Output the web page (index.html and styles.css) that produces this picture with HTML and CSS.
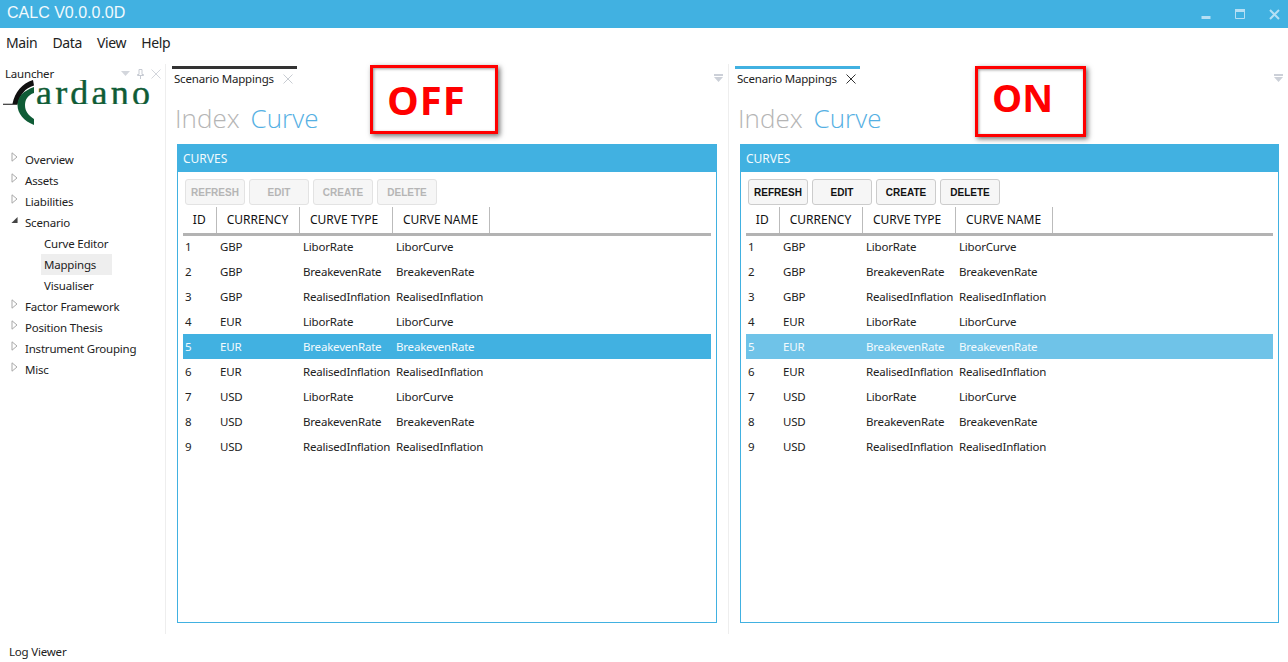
FILE: index.html
```html
<!DOCTYPE html>
<html lang="en">
<head>
  <meta charset="UTF-8">
  <title>CALC V0.0.0.0D</title>
  <link rel="stylesheet" href="styles.css">
</head>
<body>
  <svg class="defs" width="0" height="0">
    <symbol id="tri-closed" viewBox="0 0 7 10"><path d="M1 .8 6 5 1 9.2Z" fill="#fff" stroke="#a9a9a9"/></symbol>
    <symbol id="tri-open" viewBox="0 0 8 8"><path d="M7.5 .5V7.500H.5Z" fill="#444"/></symbol>
    <symbol id="dock-menu" viewBox="0 0 9 8"><path d="M0 0H9V2H0ZM0 3H9L4.500 8Z" fill="#ccd0d8"/></symbol>
  </svg>

  <div class="app">
    <div class="titlebar">
      <span class="app-title">CALC V0.0.0.0D</span>
      <div class="win-buttons">
        <svg width="10" height="11" viewBox="0 0 10 11"><path d="M.5 7H9.500V10H.5Z" fill="#b5dff4"/></svg>
        <svg width="10" height="11" viewBox="0 0 10 11"><path d="M.5 .5H9.500V9.500H.5Z" fill="none" stroke="#b5dff4"/><path d="M0 0H10V3H0Z" fill="#b5dff4"/></svg>
        <svg width="11" height="11" viewBox="0 0 11 11"><path d="M1 1 10 10M10 1 1 10" stroke="#b5dff4" stroke-width="2"/></svg>
      </div>
    </div>

    <div class="menu">
      <span>Main</span>
      <span>Data</span>
      <span>View</span>
      <span>Help</span>
    </div>

    <div class="main">
      <div class="sidebar">
        <div class="launcher-head">
          <span class="tight">Launcher</span>
          <div class="launcher-icons">
            <svg width="9" height="5" viewBox="0 0 9 5"><path d="M0 0H9L4.500 5Z" fill="#d3d6dc"/></svg>
            <svg width="7" height="10" viewBox="0 0 7 10"><path d="M2 .5H5V5.500H6.500V6.500H.5V5.500H2ZM3.500 6.500V10" fill="none" stroke="#c6cad2"/></svg>
            <svg width="10" height="10" viewBox="0 0 10 10"><path d="M.5 .5 9.500 9.500M9.500 .5 .5 9.500" stroke="#d3d6dc"/></svg>
          </div>
        </div>
        <svg class="logo" width="160" height="46" viewBox="0 0 160 46">
          <path d="M3 23.800H12.500C15 12 22 3.500 33 0L34 5.500C25 8 20 15 17.500 24.700H3Z" fill="#111"/>
          <path d="M34 7C23 11 17.500 17 17.500 25 17.500 33.500 24 41 34 45V39C28 35 25 31 25 25 25 19.500 28 15 34 13Z" fill="#0f5c36"/>
          <text class="logo-text" x="36" y="25">ardano</text>
          <rect x="36" y="24" width="120" height="6" fill="#fff"/>
        </svg>

        <ul class="tree tight">
          <li><svg class="tri"><use href="#tri-closed"/></svg>Overview</li>
          <li><svg class="tri"><use href="#tri-closed"/></svg>Assets</li>
          <li><svg class="tri"><use href="#tri-closed"/></svg>Liabilities</li>
          <li><svg class="tri"><use href="#tri-open"/></svg>Scenario</li>
          <li class="child">Curve Editor</li>
          <li class="child selected">Mappings</li>
          <li class="child">Visualiser</li>
          <li><svg class="tri"><use href="#tri-closed"/></svg>Factor Framework</li>
          <li><svg class="tri"><use href="#tri-closed"/></svg>Position Thesis</li>
          <li><svg class="tri"><use href="#tri-closed"/></svg>Instrument Grouping</li>
          <li><svg class="tri"><use href="#tri-closed"/></svg>Misc</li>
        </ul>
      </div>

      <div class="panel panel-off">
        <div class="tab-strip">
          <div class="tab tight">Scenario Mappings
            <svg width="10" height="10" viewBox="0 0 10 10"><path d="M.5 .5 9.500 9.500M9.500 .5 .5 9.500" stroke="#c8ccd2"/></svg>
          </div>
          <svg class="dock-menu"><use href="#dock-menu"/></svg>
        </div>
        <div class="view-title"><span class="grey">Index</span><span class="blue">Curve</span></div>
        <div class="card">
          <div class="card-head">CURVES</div>
          <div class="toolbar">
            <button disabled>REFRESH</button>
            <button disabled>EDIT</button>
            <button disabled>CREATE</button>
            <button disabled>DELETE</button>
          </div>
          <table class="grid">
            <thead>
              <tr><th class="c-id">ID</th><th class="c-cur">CURRENCY</th><th class="c-type">CURVE TYPE</th><th class="c-name">CURVE NAME</th><th></th></tr>
            </thead>
            <tbody>
              <tr><td>1</td><td>GBP</td><td>LiborRate</td><td>LiborCurve</td><td></td></tr>
              <tr><td>2</td><td>GBP</td><td>BreakevenRate</td><td>BreakevenRate</td><td></td></tr>
              <tr><td>3</td><td>GBP</td><td>RealisedInflation</td><td>RealisedInflation</td><td></td></tr>
              <tr><td>4</td><td>EUR</td><td>LiborRate</td><td>LiborCurve</td><td></td></tr>
              <tr class="sel"><td>5</td><td>EUR</td><td>BreakevenRate</td><td>BreakevenRate</td><td></td></tr>
              <tr><td>6</td><td>EUR</td><td>RealisedInflation</td><td>RealisedInflation</td><td></td></tr>
              <tr><td>7</td><td>USD</td><td>LiborRate</td><td>LiborCurve</td><td></td></tr>
              <tr><td>8</td><td>USD</td><td>BreakevenRate</td><td>BreakevenRate</td><td></td></tr>
              <tr><td>9</td><td>USD</td><td>RealisedInflation</td><td>RealisedInflation</td><td></td></tr>
            </tbody>
          </table>
        </div>
        <div class="callout callout-off">OFF</div>
      </div>

      <div class="panel panel-on">
        <div class="tab-strip">
          <div class="tab tight">Scenario Mappings
            <svg width="10" height="10" viewBox="0 0 10 10"><path d="M.5 .5 9.500 9.500M9.500 .5 .5 9.500" stroke="#333"/></svg>
          </div>
          <svg class="dock-menu"><use href="#dock-menu"/></svg>
        </div>
        <div class="view-title"><span class="grey">Index</span><span class="blue">Curve</span></div>
        <div class="card">
          <div class="card-head">CURVES</div>
          <div class="toolbar">
            <button>REFRESH</button>
            <button>EDIT</button>
            <button>CREATE</button>
            <button>DELETE</button>
          </div>
          <table class="grid">
            <thead>
              <tr><th class="c-id">ID</th><th class="c-cur">CURRENCY</th><th class="c-type">CURVE TYPE</th><th class="c-name">CURVE NAME</th><th></th></tr>
            </thead>
            <tbody>
              <tr><td>1</td><td>GBP</td><td>LiborRate</td><td>LiborCurve</td><td></td></tr>
              <tr><td>2</td><td>GBP</td><td>BreakevenRate</td><td>BreakevenRate</td><td></td></tr>
              <tr><td>3</td><td>GBP</td><td>RealisedInflation</td><td>RealisedInflation</td><td></td></tr>
              <tr><td>4</td><td>EUR</td><td>LiborRate</td><td>LiborCurve</td><td></td></tr>
              <tr class="sel"><td>5</td><td>EUR</td><td>BreakevenRate</td><td>BreakevenRate</td><td></td></tr>
              <tr><td>6</td><td>EUR</td><td>RealisedInflation</td><td>RealisedInflation</td><td></td></tr>
              <tr><td>7</td><td>USD</td><td>LiborRate</td><td>LiborCurve</td><td></td></tr>
              <tr><td>8</td><td>USD</td><td>BreakevenRate</td><td>BreakevenRate</td><td></td></tr>
              <tr><td>9</td><td>USD</td><td>RealisedInflation</td><td>RealisedInflation</td><td></td></tr>
            </tbody>
          </table>
        </div>
        <div class="callout callout-on">ON</div>
      </div>
    </div>

    <div class="footer tight">Log Viewer</div>
  </div>
</body>
</html>
```

FILE: styles.css
```css
* {
  box-sizing: border-box;
}
html, body {
  margin: 0;
  height: 100%;
  overflow: hidden;
}
body {
  font-family: "Noto Sans", "Open Sans", sans-serif;
  font-size: 12px;
  color: #222;
  background: white;
}
.defs {
  position: absolute;
}
.app {
  display: flex;
  flex-direction: column;
  height: 662px;
}
/* mixed-case text runs narrower than Noto at this size */
.tight,
.grid td {
  font-size: 11.5px;
  letter-spacing: -0.2px;
  white-space: nowrap;
}

/* title bar */
.titlebar {
  height: 28px;
  flex: none;
  background: #41b1e1;
  display: flex;
  align-items: center;
  justify-content: space-between;
  padding: 0 8px 2px 7px;
}
.app-title {
  font-family: "Liberation Sans", Arial, sans-serif;
  font-size: 16px;
  color: #f2fafd;
}
.win-buttons {
  display: flex;
  gap: 24px;
  align-items: center;
  padding-top: 2px;
}

/* menu */
.menu {
  height: 36px;
  flex: none;
  display: flex;
  gap: 15px;
  padding: 5px 0 0 6px;
  font-size: 14px;
  letter-spacing: -0.35px;
  line-height: 20px;
}

.main {
  height: 570px;
  flex: none;
  display: flex;
}

/* launcher */
.sidebar {
  width: 166px;
  flex: none;
  border-right: 1px solid #eee;
}
.launcher-head {
  display: flex;
  justify-content: space-between;
  align-items: center;
  height: 18px;
  padding: 1px 4px 0 5px;
}
.launcher-icons {
  display: flex;
  align-items: center;
  gap: 7px;
}
.logo {
  display: block;
  margin-top: -2px;
}
.logo-text {
  font-family: "Liberation Serif", serif;
  font-size: 36px;
  letter-spacing: 3.2px;
  fill: #0f5c36;
  stroke: #0f5c36;
  stroke-width: 0.4px;
}
.tree {
  list-style: none;
  margin: 23px 0 0;
  padding: 0;
}
.tree li {
  height: 21px;
  line-height: 21px;
  padding-left: 25px;
  position: relative;
}
.tree li.child {
  margin-left: 41px;
  padding-left: 3px;
  width: 71px;
}
.tree li.selected {
  background: #eee;
}
.tri {
  position: absolute;
  left: 11px;
  top: 3px;
  width: 7px;
  height: 10px;
}

/* dock panels */
.panel {
  position: relative;
  flex: none;
  border-right: 1px solid #eee;
}
.panel-off {
  width: 563px;
}
.panel-on {
  width: 559px;
  border-right: none;
}
.tab-strip {
  height: 27px;
  padding: 2px 5px 0 6px;
  display: flex;
  justify-content: space-between;
  align-items: flex-start;
}
.tab {
  width: 125px;
  height: 24px;
  border-top: 3px solid #333;
  padding: 0 0 2px 2px;
  line-height: 19px;
  display: flex;
  align-items: center;
  gap: 9px;
}
.panel-on .tab {
  border-top-color: #41b1e1;
}
.dock-menu {
  width: 9px;
  height: 8px;
  margin-top: 8px;
}
.view-title {
  height: 53px;
  padding: 11px 0 0 9px;
  font-family: "Open Sans", sans-serif;
  font-weight: 300;
  font-size: 26px;
  line-height: 32px;
  display: flex;
  gap: 11px;
}
.grey {
  color: #b5b5b5;
}
.blue {
  color: #55b0e3;
}
.card {
  width: 540px;
  height: 479px;
  margin-left: 11px;
  border: 1px solid #41b1e1;
}
.panel-on .card {
  width: 539px;
}
.card-head {
  height: 28px;
  margin: -1px -1px 0;
  padding-left: 6px;
  background: #41b1e1;
  color: #f2fafd;
  line-height: 30px;
}
.toolbar {
  display: flex;
  gap: 4px;
  padding: 7px 0 0 7px;
}
button {
  width: 60px;
  height: 26px;
  padding: 0;
  font-family: "Liberation Sans", Arial, sans-serif;
  font-size: 10px;
  font-weight: bold;
  color: #111;
  background: #f6f6f6;
  border: 1px solid #ccc;
  border-radius: 3px;
}
button:disabled {
  color: #b5b5b5;
  border-color: #e3e3e3;
}

/* curves table */
.grid {
  width: 528px;
  margin: 2px 0 0 5px;
  border-collapse: collapse;
  table-layout: fixed;
}
.panel-on .grid {
  width: 527px;
}
.grid th {
  height: 27px;
  padding: 0 0 1px;
  font-weight: normal;
  text-align: center;
  color: #111;
  border-bottom: 3px solid #b3b3b3;
}
.grid th.c-id,
.grid th.c-cur,
.grid th.c-type,
.grid th.c-name {
  border-right: 1px solid #bbb;
}
.grid th.c-type {
  padding-right: 3px;
}
.c-id { width: 33px; }
.c-cur { width: 83px; }
.c-type { width: 93px; }
.c-name { width: 97px; }
.grid td {
  height: 25px;
  padding: 0 0 1px 4px;
}
.grid td:first-child {
  padding-left: 2px;
}
.grid tr.sel {
  background: #41b1e1;
  color: #f2fafd;
}
.panel-on .grid tr.sel {
  background: #6fc3e8;
}

/* red notes pasted on the screenshot */
.callout {
  position: absolute;
  border: 3px solid #f00;
  box-shadow: 2px 2px 5px rgba(0,0,0,0.55), inset 1px 1px 3px rgba(0,0,0,0.4);
  background: white;
  color: #f00;
  font-family: "Open Sans", sans-serif;
  font-weight: bold;
  line-height: 1;
}
.callout-off {
  left: 204px;
  top: 1px;
  width: 128px;
  height: 69px;
  padding: 12px 0 0 14px;
  font-size: 40px;
  letter-spacing: 1px;
}
.callout-on {
  left: 246px;
  top: 2px;
  width: 111px;
  height: 71px;
  padding: 9px 0 0 14px;
  font-size: 38px;
}

.footer {
  flex: 1;
  padding: 10px 0 0 9px;
}
```
